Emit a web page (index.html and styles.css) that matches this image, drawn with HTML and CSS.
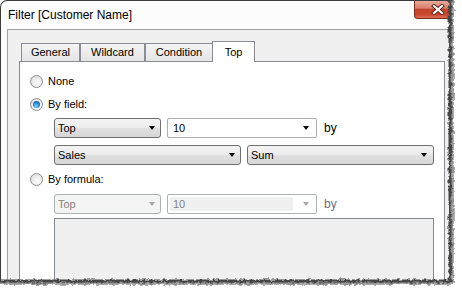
FILE: index.html
```html
<!DOCTYPE html>
<html lang="en">
<head>
    <meta charset="UTF-8">
    <meta name="viewport" content="width=device-width, initial-scale=1.0">
    <title>Filter [Customer Name]</title>
    <link rel="stylesheet" href="styles.css">
</head>
<body>
    <div class="shot">
        <div class="window">
            <div class="titlebar">
                <span class="title">Filter [Customer Name]</span>
                <div class="close-btn">
                    <svg width="14" height="11" viewBox="0 0 14 11">
                        <path d="M3 2 L11 9 M11 2 L3 9" stroke="#5a2418" stroke-width="4" stroke-linecap="square" fill="none"/>
                        <path d="M3 2 L11 9 M11 2 L3 9" stroke="#fff" stroke-width="2.2" stroke-linecap="square" fill="none"/>
                    </svg>
                </div>
            </div>

            <div class="client">
                <div class="tabs">
                    <div class="tab tab-general">General</div>
                    <div class="tab tab-wildcard">Wildcard</div>
                    <div class="tab tab-condition">Condition</div>
                    <div class="tab tab-top active">Top</div>
                </div>

                <div class="panel">
                    <div class="option"><span class="radio"></span>None</div>
                    <div class="option option-field"><span class="radio checked"></span>By field:</div>

                    <div class="fields">
                        <div class="field-row">
                            <div class="select select-sm"><span>Top</span><span class="arrow"></span></div>
                            <div class="combo"><span class="combo-text">10</span><span class="arrow"></span></div>
                            <span class="by">by</span>
                        </div>
                        <div class="field-row">
                            <div class="select select-lg"><span>Sales</span><span class="arrow"></span></div>
                            <div class="select select-lg"><span>Sum</span><span class="arrow"></span></div>
                        </div>
                    </div>

                    <div class="option option-formula"><span class="radio"></span>By formula:</div>

                    <div class="fields fields-formula">
                        <div class="field-row">
                            <div class="select select-sm disabled"><span>Top</span><span class="arrow"></span></div>
                            <div class="combo disabled"><span class="combo-text">10</span><span class="arrow"></span></div>
                            <span class="by disabled">by</span>
                        </div>
                        <div class="formula-box"></div>
                    </div>
                </div>
            </div>
        </div>

        <svg class="torn" width="462" height="295" viewBox="0 0 462 295">
            <defs>
                <filter id="rough" filterUnits="userSpaceOnUse" x="-20" y="-20" width="510" height="340">
                    <feTurbulence type="fractalNoise" baseFrequency="0.3" numOctaves="2" seed="11"/>
                    <feDisplacementMap in="SourceGraphic" scale="4.5" xChannelSelector="R" yChannelSelector="G"/>
                </filter>
            </defs>
            <g filter="url(#rough)">
                <path d="M450 -10 L450 281 L-10 281 L-10 320 L480 320 L480 -10 Z" fill="#fff"/>
                <path d="M452 -10 L452 283 L-10 283" fill="none" stroke="#949494" stroke-width="3.5"/>
                <path d="M450 -10 L450 281 L-10 281" fill="none" stroke="#454545" stroke-width="3"/>
            </g>
        </svg>
    </div>
</body>
</html>
```

FILE: styles.css
```css
body {
    margin: 0;
    padding: 0;
    background-color: #fff;
    font-family: "Liberation Sans", Arial, sans-serif;
    font-size: 11px;
    color: #000;
}
.shot {
    position: relative;
    width: 462px;
    height: 295px;
    overflow: hidden;
    background-color: #fff;
}
.window {
    position: relative;
    width: 449px;
    height: 290px;
    border-top: 1px solid #3c3c3c;
    border-left: 1px solid #3c3c3c;
    border-top-left-radius: 7px;
    background-color: #fcfcfc;
    overflow: hidden;
}
.titlebar {
    height: 28px;
    display: flex;
    align-items: center;
    padding-left: 7px;
    font-size: 12px;
}
.close-btn {
    position: absolute;
    top: -1px;
    right: -7px;
    width: 43px;
    height: 19px;
    box-sizing: border-box;
    border: 1px solid #7a2c1e;
    border-top: none;
    border-radius: 0 0 4px 4px;
    background: linear-gradient(#eab0a2 0%, #db7e6a 45%, #c4432c 52%, #c9472f 80%, #de6e50 100%);
    display: flex;
    align-items: center;
    justify-content: center;
    padding-left: 4px;
}
.client {
    margin-left: 6px;
    height: 261px;
    border-top: 1px solid #a3a3a3;
    border-left: 1px solid #a3a3a3;
    background-color: #f0f0f0;
    padding: 11px 5px 0 11px;
}

/* tabs */
.tabs {
    display: flex;
    align-items: flex-end;
    height: 20px;
    padding-left: 2px;
}
.tab {
    box-sizing: border-box;
    height: 18px;
    border: 1px solid #898c95;
    border-bottom: none;
    background: linear-gradient(#f4f4f4, #e4e4e4);
    text-align: center;
    line-height: 17px;
}
.tab-general { width: 59px; }
.tab-wildcard { width: 65px; }
.tab-condition { width: 68px; }
.tab-top { width: 43px; }
.tab.active {
    position: relative;
    z-index: 1;
    height: 21px;
    margin-bottom: -1px;
    margin-left: -1px;
    background: #fff;
    line-height: 20px;
}

/* panel */
.panel {
    height: 240px;
    border: 1px solid #898c95;
    background-color: #fff;
    padding: 11px 0 0 10px;
}
.option {
    display: flex;
    align-items: center;
    gap: 5px;
    height: 16px;
}
.option-field {
    margin-top: 7px;
}
.option-formula {
    margin-top: 6px;
}
.radio {
    width: 13px;
    height: 13px;
    box-sizing: border-box;
    border-radius: 50%;
    border: 1px solid #8f8f8f;
    background: radial-gradient(circle at 60% 65%, #fdfdfd 0%, #e9e9e9 55%, #cfcfcf 100%);
    display: flex;
    align-items: center;
    justify-content: center;
}
.radio.checked::after {
    content: "";
    width: 7px;
    height: 7px;
    border-radius: 50%;
    background: radial-gradient(circle at 45% 70%, #7fd3ff 0%, #2b8ed3 45%, #13406e 100%);
}

/* dropdowns */
.fields {
    margin-left: 24px;
    margin-top: 6px;
    display: flex;
    flex-direction: column;
    gap: 7px;
}
.fields-formula {
    margin-top: 7px;
    gap: 4px;
}
.field-row {
    display: flex;
    align-items: center;
    gap: 6px;
    height: 20px;
}
.select {
    box-sizing: border-box;
    height: 20px;
    border: 1px solid #707070;
    border-radius: 3px;
    background: linear-gradient(#f3f3f3 0%, #ececec 48%, #e0e0e0 52%, #d6d6d6 100%);
    display: flex;
    align-items: center;
    justify-content: space-between;
    padding: 0 5px 0 3px;
}
.select-sm { width: 107px; }
.select-lg { width: 187px; }
.select-lg + .select-lg { padding-right: 6px; }
.arrow {
    width: 0;
    height: 0;
    border-left: 3.5px solid transparent;
    border-right: 3.5px solid transparent;
    border-top: 4px solid #000;
}
.combo {
    box-sizing: border-box;
    width: 150px;
    height: 20px;
    border: 1px solid #abadb3;
    border-radius: 2px;
    background-color: #fff;
    display: flex;
    align-items: center;
    padding-right: 7px;
}
.combo-text {
    flex: 1;
    padding-left: 5px;
}
.by {
    margin-left: 1px;
    font-size: 12px;
}

/* disabled state */
.select.disabled {
    border-color: #adb2b5;
    background: #f4f4f4;
    color: #838383;
}
.disabled .arrow {
    border-top-color: #a6a6a6;
}
.combo.disabled {
    border-color: #adb2b5;
    color: #838383;
}
.combo.disabled .combo-text {
    height: 14px;
    line-height: 14px;
    margin: 0 10px 0 2px;
    padding-left: 3px;
    background-color: #f0f0f0;
}
.by.disabled {
    color: #6d6d86;
}
.formula-box {
    box-sizing: border-box;
    width: 380px;
    height: 80px;
    border: 1px solid #828790;
    background-color: #f0f0f0;
}

.torn {
    position: absolute;
    top: 0;
    left: 0;
    pointer-events: none;
}
```
